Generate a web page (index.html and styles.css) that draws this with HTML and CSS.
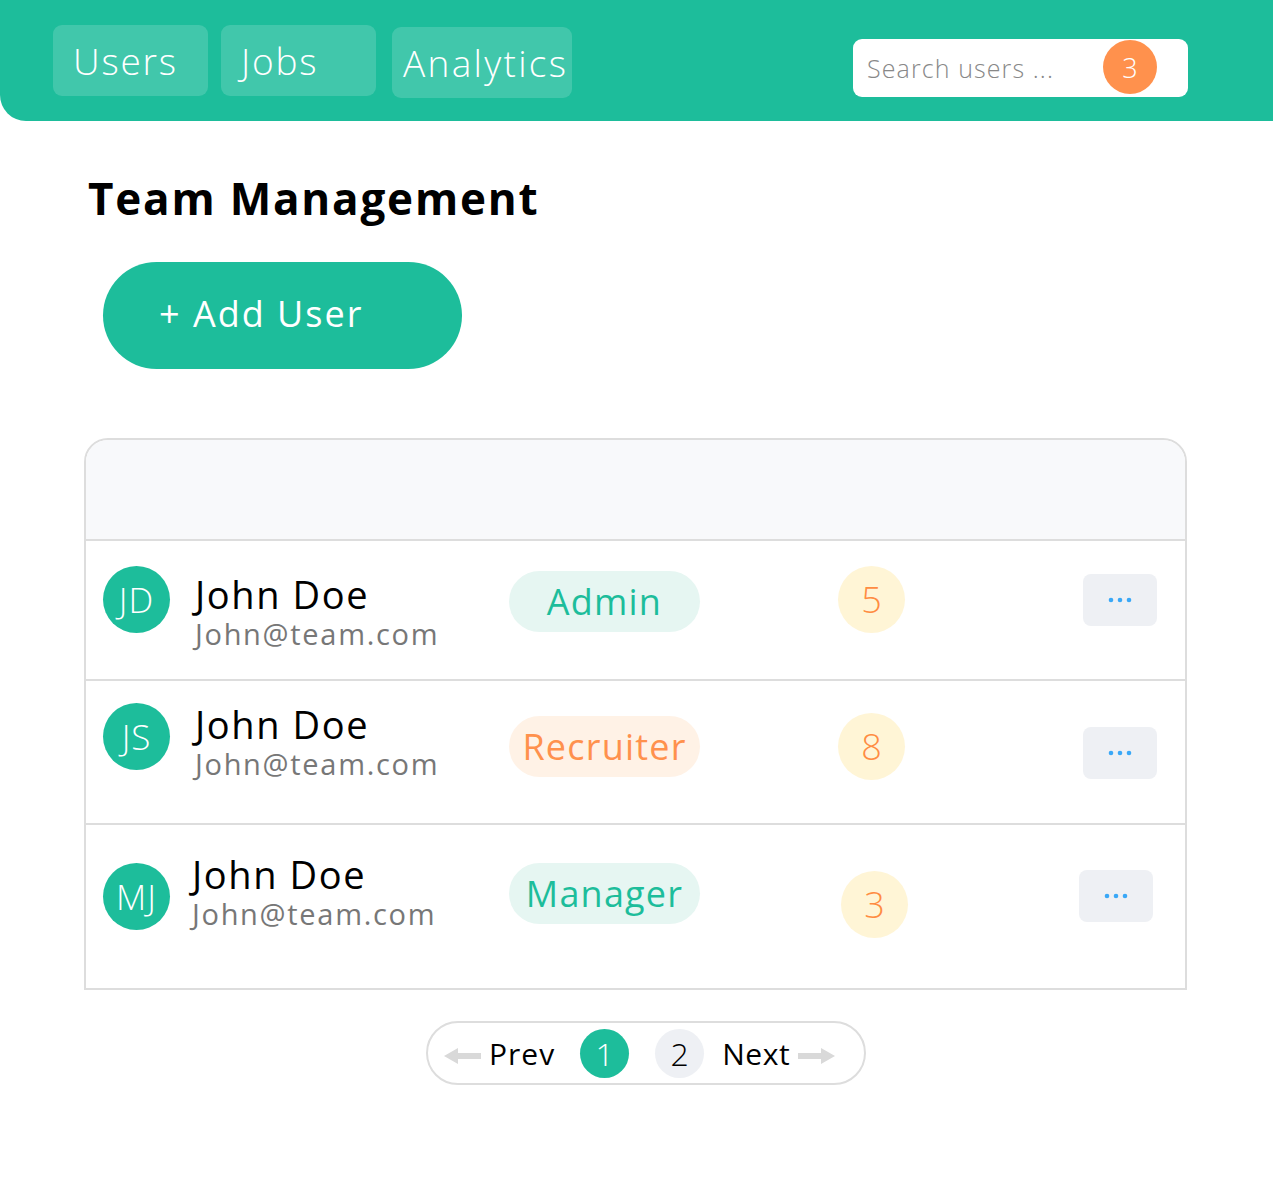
FILE: index.html
```html
<!DOCTYPE html>
<html lang="en">
  <head>
    <meta charset="UTF-8" />
    <meta name="viewport" content="width=device-width, initial-scale=1.0" />
    <title>Team Management</title>

    <link rel="stylesheet" href="styles.css">
  </head>
  <body>
    <header class="topbar">
      <nav class="tabs">
        <a class="tab" href="#">Users</a>
        <a class="tab" href="#">Jobs</a>
        <a class="tab tab-wide" href="#">Analytics</a>
      </nav>
      <div class="search">
        <span class="search-text">Search users ...</span>
        <span class="search-count">3</span>
      </div>
    </header>

    <main class="page">
      <h1 class="title">Team Management</h1>
      <button class="add-user">+ Add User</button>

      <section class="team">
        <div class="team-head"></div>

        <div class="member">
          <div class="avatar">JD</div>
          <div class="info">
            <div class="name">John Doe</div>
            <div class="email">John@team.com</div>
          </div>
          <span class="role role-admin">Admin</span>
          <span class="count">5</span>
          <button class="more">
            <svg width="24" height="6" viewBox="0 0 24 6"><circle cx="3" cy="3" r="2.3" /><circle cx="12" cy="3" r="2.3" /><circle cx="21" cy="3" r="2.3" /></svg>
          </button>
        </div>

        <div class="member member-2">
          <div class="avatar">JS</div>
          <div class="info">
            <div class="name">John Doe</div>
            <div class="email">John@team.com</div>
          </div>
          <span class="role role-recruiter">Recruiter</span>
          <span class="count">8</span>
          <button class="more">
            <svg width="24" height="6" viewBox="0 0 24 6"><circle cx="3" cy="3" r="2.3" /><circle cx="12" cy="3" r="2.3" /><circle cx="21" cy="3" r="2.3" /></svg>
          </button>
        </div>

        <div class="member member-3">
          <div class="avatar">MJ</div>
          <div class="info">
            <div class="name">John Doe</div>
            <div class="email">John@team.com</div>
          </div>
          <span class="role role-admin">Manager</span>
          <span class="count">3</span>
          <button class="more">
            <svg width="24" height="6" viewBox="0 0 24 6"><circle cx="3" cy="3" r="2.3" /><circle cx="12" cy="3" r="2.3" /><circle cx="21" cy="3" r="2.3" /></svg>
          </button>
        </div>
      </section>

      <div class="pager">
        <svg class="arrow" width="37" height="16" viewBox="0 0 37 16"><path d="M0 8 L14 0 L14 5 L37 5 L37 11 L14 11 L14 16 Z" /></svg>
        <span class="pager-label prev">Prev</span>
        <span class="page-num active">1</span>
        <span class="page-num">2</span>
        <span class="pager-label next">Next</span>
        <svg class="arrow" width="37" height="16" viewBox="0 0 37 16"><path d="M37 8 L23 0 L23 5 L0 5 L0 11 L23 11 L23 16 Z" /></svg>
      </div>
    </main>
  </body>
</html>
```

FILE: styles.css
```css
body {
  margin: 0;
  font-family: "Open Sans", "Noto Sans", sans-serif;
  background: #fff;
  color: #000;
}

.topbar {
  height: 121px;
  background: #1dbd9b;
  border-bottom-left-radius: 26px;
  display: flex;
  justify-content: space-between;
  align-items: flex-start;
  padding: 25px 85px 0 53px;
  box-sizing: border-box;
}

.tabs {
  display: flex;
  gap: 13px;
}

.tab {
  min-width: 155px;
  height: 71px;
  box-sizing: border-box;
  padding: 0 20px;
  display: flex;
  align-items: center;
  background: rgba(255, 255, 255, 0.16);
  border-radius: 9px;
  color: #fff;
  text-decoration: none;
  font-weight: 300;
  font-size: 37px;
  letter-spacing: 1.8px;
}

.tab-wide {
  margin-left: 3px;
  margin-top: 2px;
  padding: 0 4px 0 11px;
  letter-spacing: 2.3px;
}

.search {
  margin-top: 14px;
  width: 335px;
  height: 58px;
  box-sizing: border-box;
  background: #fff;
  border-radius: 9px;
  display: flex;
  align-items: center;
  justify-content: space-between;
  padding: 0 31px 0 14px;
}

.search-text {
  color: #888;
  font-size: 25px;
  font-weight: 300;
  letter-spacing: 1.1px;
}

.search-count {
  width: 54px;
  height: 54px;
  border-radius: 50%;
  background: #ff914d;
  color: #fff;
  font-size: 27px;
  font-weight: 300;
  display: flex;
  align-items: center;
  justify-content: center;
  margin-top: -2px;
}

.page {
  padding: 0 86px 0 84px;
}

.title {
  margin: 47px 0 0 4px;
  font-size: 44px;
  font-weight: 700;
  line-height: 60px;
  letter-spacing: 1.8px;
}

.add-user {
  display: block;
  margin: 34px 0 0 19px;
  width: 359px;
  height: 107px;
  border: none;
  border-radius: 54px;
  background: #1dbd9b;
  color: #fff;
  font-family: inherit;
  font-size: 36px;
  letter-spacing: 2px;
  text-align: left;
  padding: 0 0 4px 56px;
}

.team {
  margin-top: 69px;
  border: 2px solid #ddd;
  border-radius: 24px 24px 0 0;
  overflow: hidden;
}

.team-head {
  height: 99px;
  background: #f8f9fb;
  border-bottom: 2px solid #ddd;
}

.member {
  height: 140px;
  box-sizing: border-box;
  padding: 0 28px 22px 17px;
  display: flex;
  align-items: center;
  border-bottom: 2px solid #ddd;
}

.member-2 {
  height: 144px;
  padding-bottom: 32px;
}

.member-3 {
  height: 163px;
  padding-bottom: 21px;
  border-bottom: none;
}

.avatar {
  width: 67px;
  height: 67px;
  flex: none;
  border-radius: 50%;
  background: #1dbd9b;
  color: #fff;
  font-size: 35px;
  font-weight: 300;
  letter-spacing: 1px;
  display: flex;
  align-items: center;
  justify-content: center;
}

.info {
  width: 314px;
  margin: 25px 0 0 25px;
}

.member-2 .info {
  margin-top: 12px;
}

.member-3 .info {
  margin: -8px 0 0 22px;
  width: 317px;
}

.name {
  font-size: 38px;
  line-height: 44px;
  letter-spacing: 1.6px;
}

.email {
  font-size: 29px;
  line-height: 36px;
  letter-spacing: 1.7px;
  color: #777;
}

.role {
  width: 191px;
  height: 61px;
  border-radius: 31px;
  display: flex;
  align-items: center;
  justify-content: center;
  font-size: 36px;
  letter-spacing: 1.2px;
  margin-top: 5px;
}

.member-2 .role {
  margin-top: 20px;
}

.member-3 .role {
  margin-top: -6px;
}

.role-admin {
  background: #e6f6f2;
  color: #1dbd9b;
}

.role-recruiter {
  background: #fff2e6;
  color: #ff914d;
}

.count {
  width: 67px;
  height: 67px;
  border-radius: 50%;
  background: #fff5d6;
  color: #ff8c42;
  font-size: 36px;
  font-weight: 300;
  display: flex;
  align-items: center;
  justify-content: center;
  margin-left: 138px;
}

.member-2 .count {
  margin-top: 20px;
}

.member-3 .count {
  margin-left: 141px;
  margin-top: 16px;
}

.more {
  margin-left: auto;
  margin-top: 2px;
  width: 74px;
  height: 52px;
  border: none;
  border-radius: 8px;
  background: #eef0f4;
  display: flex;
  align-items: center;
  justify-content: center;
  fill: #3aa8f7;
}

.member-2 .more {
  margin-top: 34px;
}

.member-3 .more {
  margin-top: 0;
  margin-right: 4px;
}

.pager {
  width: 440px;
  height: 64px;
  box-sizing: border-box;
  margin: 31px 0 0 342px;
  border: 2px solid #ddd;
  border-radius: 32px;
  display: flex;
  align-items: center;
  padding: 0 0 0 16px;
}

.arrow {
  flex: none;
  fill: #d9d9d9;
  margin-top: 6px;
}

.pager-label {
  font-size: 30px;
  letter-spacing: 1px;
}

.prev {
  margin: 0 25px 0 8px;
}

.next {
  margin: 0 8px 0 18px;
  letter-spacing: 0.6px;
}

.page-num {
  width: 49px;
  height: 49px;
  border-radius: 50%;
  background: #eef0f4;
  display: flex;
  align-items: center;
  justify-content: center;
  font-size: 32px;
  font-weight: 300;
}

.page-num.active {
  background: #1dbd9b;
  color: #fff;
  margin-right: 26px;
}
```
